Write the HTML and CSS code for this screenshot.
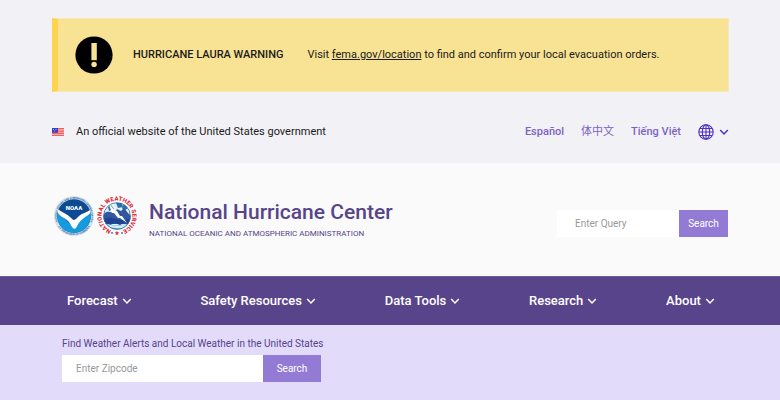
FILE: index.html
```html
<!DOCTYPE html>
<html lang="en">
<head>
<meta charset="utf-8">
<meta name="viewport" content="width=device-width, initial-scale=1">
<title>National Hurricane Center</title>
<link rel="stylesheet" href="styles.css">
</head>
<body>
<svg class="defs" width="0" height="0" aria-hidden="true">
  <symbol id="chevron" viewBox="0 0 10 8"><path d="M1.2 2 5 5.9 8.8 2" fill="none" stroke="currentColor" stroke-width="1.5"/></symbol>
</svg>

<div class="top">
  <section class="alert" aria-label="Warning">
    <svg class="alert-icon" viewBox="0 0 38 38" aria-hidden="true">
      <circle cx="19" cy="19" r="18.6"/>
      <path class="alert-mark" d="M16.400 7h5.400v17.200h-5.400z"/>
      <circle class="alert-mark" cx="19.100" cy="28.400" r="2.700"/>
    </svg>
    <strong class="alert-title">HURRICANE LAURA WARNING</strong>
    <p class="alert-text">Visit <a href="#">fema.gov/location</a> to find and confirm your local evacuation orders.</p>
  </section>

  <div class="official">
    <svg class="flag" viewBox="0 0 12 8" aria-hidden="true">
      <path fill="#f6b8b4" d="M0 0h12v8H0z"/>
      <path fill="#f0605c" d="M0 0h12v1.300H0zM0 2.500h12v1.200H0zM0 4.800h12V6H0zM0 7h12v1H0z"/>
      <path fill="#3b3fc4" d="M0 0h6v4.800H0z"/>
      <path fill="#a9a9ee" d="M1 1h1v1H1zM3.500 1h1v1h-1zM2.200 2.600h1v1h-1z"/>
    </svg>
    <span class="official-text">An official website of the United States government</span>
    <nav class="languages" aria-label="Languages">
      <a href="#" lang="es">Español</a>
      <a href="#" lang="zh" class="chinese">体中文</a>
      <a href="#" lang="vi">Tiếng Việt</a>
      <button class="globe-button" type="button" aria-label="All languages">
        <svg class="globe" viewBox="0 0 16 16" aria-hidden="true">
          <g fill="none" stroke="currentColor" stroke-width="1.100">
            <circle cx="8" cy="8" r="7.200"/>
            <ellipse cx="8" cy="8" rx="3.700" ry="7.200"/>
            <path d="M8 .8v14.400M.8 8h14.400M2 4.500h12M2 11.500h12"/>
          </g>
        </svg>
        <svg class="chevron" aria-hidden="true"><use href="#chevron"/></svg>
      </button>
    </nav>
  </div>
</div>

<header class="brand">
  <a class="logos" href="#" aria-label="National Hurricane Center home">
    <svg class="logo" viewBox="0 0 42 42" aria-hidden="true">
      <defs>
        <clipPath id="disc"><circle cx="21" cy="21" r="16.800"/></clipPath>
        <path id="noaa-top" d="M5.700 29.100A17.300 17.300 0 1 1 36.300 29.100"/>
        <path id="noaa-base" d="M3.500 28.800A19.200 19.200 0 0 0 38.500 28.800"/>
      </defs>
      <circle cx="21" cy="21" r="20" fill="#d3e3ee"/>
      <text class="seal-text"><textPath href="#noaa-top" startOffset="50%">NATIONAL OCEANIC AND ATMOSPHERIC ADMINISTRATION</textPath></text>
      <text class="seal-text"><textPath href="#noaa-base" startOffset="50%">U.S. DEPARTMENT OF COMMERCE</textPath></text>
      <g clip-path="url(#disc)">
        <path fill="#0c4a94" d="M0 0h42v42H0z"/>
        <path fill="#159bdd" d="M0 15c6 3 11 7 15 12 2 2 4 3 6 3 3-6 8-11 21-15v27H0z"/>
        <path fill="#fff" d="M3 13c6 4 11 6 14 9 2 2 3 3 4 3 2 0 4-4 8-6 4-2 7-3 11-6-1 5-5 7-9 10-5 3-6 7-8 10-1 1-3 1-4-1-2-4-4-7-8-9-4-2-7-5-8-10z"/>
      </g>
      <text class="noaa-name" x="21" y="15">NOAA</text>
    </svg>
    <svg class="logo" viewBox="0 0 42 42" aria-hidden="true">
      <defs>
        <path id="nws-ring" d="M14 34.700A15.400 15.400 0 1 1 28 34.700"/>
        <clipPath id="storm"><circle cx="21" cy="21" r="13.600"/></clipPath>
      </defs>
      <circle cx="21" cy="21" r="20.500" fill="#fff"/>
      <text class="nws-text"><textPath href="#nws-ring" startOffset="50%">NATIONAL WEATHER SERVICE</textPath></text>
      <g clip-path="url(#storm)">
        <path fill="#e3f0f7" d="M0 0h42v42H0z"/>
        <path fill="#2f6fa8" d="M20 8h6l1 4-5 1zM28 9l4 4-4 3-2-3zM12 12l3-2 3 4-5 2z"/>
        <path fill="#31579f" d="M7 22c0-4 4-6 7-5l5 1 2-4 4 2 3-3 4 5 4 4v7H7z"/>
        <path fill="#1f4391" d="M7 24c5-2 9-1 13 0s9 2 15-1l-2 6-5-1-4 2-5-2-5 2-6-2z"/>
        <path fill="#4fb0d7" d="M6 28c8 3 21 3 30 0l-5 8H11z"/>
        <path fill="#d5ebf4" d="M11 29c7 2 13 2 20 0l-2 3c-5 2-11 1-15 0z"/>
        <path fill="#fff" d="M12 7l7 9 2 0 3 5 2 0 5 7-7-5-2 0-4-5-2 0z"/>
      </g>
      <circle cx="21" cy="21" r="13.400" fill="none" stroke="#2d6ba5" stroke-width=".8"/>
      <path fill="#e2303d" d="M21 35.700l.7 1.500 1.600.2-1.200 1.100.4 1.700-1.500-.9-1.500.9.400-1.700-1.200-1.100 1.600-.2z"/>
      <g fill="#3c5fb0"><circle cx="16" cy="37.900" r=".9"/><circle cx="26" cy="37.900" r=".9"/></g>
    </svg>
  </a>
  <div class="brand-name">
    <h1>National Hurricane Center</h1>
    <p>NATIONAL OCEANIC AND ATMOSPHERIC ADMINISTRATION</p>
  </div>
  <form class="search query" role="search">
    <input type="search" placeholder="Enter Query" aria-label="Enter query">
    <button type="button">Search</button>
  </form>
</header>

<nav class="menu" aria-label="Main">
  <button type="button">Forecast <svg class="chevron" aria-hidden="true"><use href="#chevron"/></svg></button>
  <button type="button">Safety Resources <svg class="chevron" aria-hidden="true"><use href="#chevron"/></svg></button>
  <button type="button">Data Tools <svg class="chevron" aria-hidden="true"><use href="#chevron"/></svg></button>
  <button type="button">Research <svg class="chevron" aria-hidden="true"><use href="#chevron"/></svg></button>
  <button type="button">About <svg class="chevron" aria-hidden="true"><use href="#chevron"/></svg></button>
</nav>

<main class="local">
  <label for="zipcode">Find Weather Alerts and Local Weather in the United States</label>
  <form class="search zip">
    <input id="zipcode" type="text" placeholder="Enter Zipcode">
    <button type="button">Search</button>
  </form>
</main>
</body>
</html>
```
FILE: styles.css
```css
* { box-sizing: border-box; }

body {
  margin: 0;
  min-height: 100vh;
  background: #e2dbfa;
  color: #1b1b1b;
  font: 11px/16px Roboto, "Noto Sans CJK SC", sans-serif;
}

button, input { font: inherit; border: 0; border-radius: 0; margin: 0; }
button { display: flex; align-items: center; background: none; padding: 0; cursor: pointer; }
h1, p { margin: 0; }
svg { flex: none; }
.defs { position: absolute; }
.chevron { width: 10px; height: 8px; }

.top { background: #f2f1f6; padding: 18px 51px 23px 52px; }

.alert {
  display: flex;
  align-items: center;
  min-height: 74px;
  padding-left: 17px;
  background: #f8e293;
  border: 1px solid #f7e8b4;
  border-left: 6px solid #fdd450;
}
.alert-icon { width: 38px; height: 38px; margin-right: 20px; }
.alert-mark { fill: #f8e293; }
.alert-title { font-weight: 500; margin-right: 24px; }
.alert-text a { color: inherit; }

.official { display: flex; align-items: center; margin-top: 32px; }
.flag { width: 12px; height: 8px; margin-right: 12px; }
.languages { display: flex; align-items: center; gap: 17px; margin-left: auto; }
.languages a { color: #7d63c6; font-weight: 500; text-decoration: none; }
.languages .chinese { font-weight: 400; }
.globe-button { gap: 5px; color: #5130c4; }
.globe { width: 16px; height: 16px; }

.brand {
  display: flex;
  align-items: center;
  min-height: 113px;
  padding: 0 52px 0 53px;
  background: #fafafa;
}
.logos { display: flex; gap: 1px; margin: 0 11px 8px 0; }
.logo { width: 42px; height: 42px; }
.seal-text { fill: #2d679b; font: 700 2.400px Roboto, sans-serif; text-anchor: middle; }
.noaa-name { fill: #fff; font: 900 6px Roboto, sans-serif; text-anchor: middle; }
.nws-text { fill: #e2303d; font: 900 6px Roboto, sans-serif; text-anchor: middle; }
.brand-name { color: #57448a; }
.brand-name h1 { font-size: 21px; line-height: 28px; font-weight: 500; }
.brand-name p { font-size: 8px; }

.search { display: flex; }
.search input { height: 27px; padding: 0 18px; background: #fff; color: #333; font-size: 10px; appearance: none; }
.search input::placeholder { color: #999; opacity: 1; }
.search button { justify-content: center; height: 27px; background: #937ad5; color: #fff; font-size: 10px; }
.query { margin-left: auto; padding-top: 8px; }
.query input { width: 122px; }
.query button { width: 49px; }

.menu {
  display: flex;
  justify-content: space-between;
  padding: 0 65px 0 67px;
  background: #58448a;
  border-top: 1px solid #6b5c93;
}
.menu button { gap: 4px; height: 48px; color: #fff; font-size: 13px; font-weight: 500; }

.local { padding: 11px 62px; }
.local label { display: block; color: #57448a; font-size: 10px; margin-bottom: 3px; }
.zip input { width: 201px; padding: 0 14px; }
.zip button { width: 58px; }
```
